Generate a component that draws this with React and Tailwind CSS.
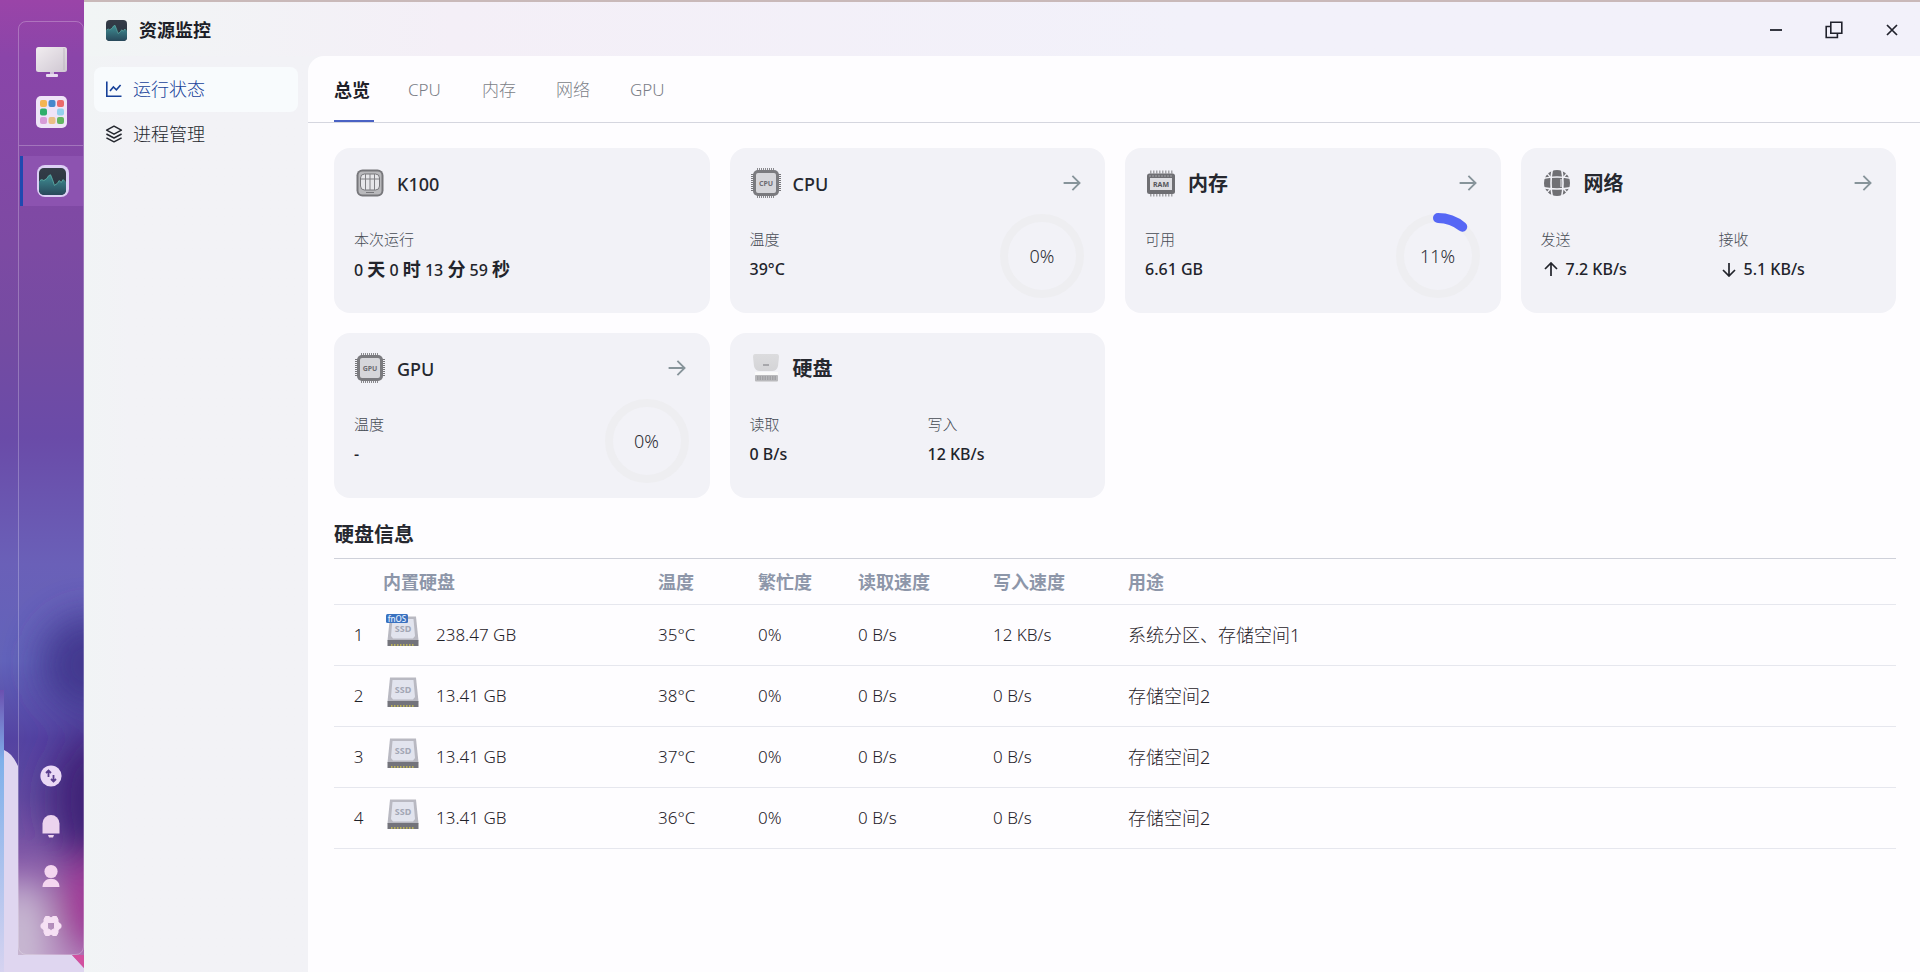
import { useState } from "react";

const navItems = [
  { id: "status", label: "运行状态", icon: ChartIcon },
  { id: "process", label: "进程管理", icon: LayersIcon },
];

const tabs = ["总览", "CPU", "内存", "网络", "GPU"];

const disks = [
  { id: 1, size: "238.47 GB", temp: "35°C", busy: "0%", read: "0 B/s", write: "12 KB/s", usage: "系统分区、存储空间1", system: true },
  { id: 2, size: "13.41 GB", temp: "38°C", busy: "0%", read: "0 B/s", write: "0 B/s", usage: "存储空间2" },
  { id: 3, size: "13.41 GB", temp: "37°C", busy: "0%", read: "0 B/s", write: "0 B/s", usage: "存储空间2" },
  { id: 4, size: "13.41 GB", temp: "36°C", busy: "0%", read: "0 B/s", write: "0 B/s", usage: "存储空间2" },
];

function ChartIcon() {
  return (
    <svg width="18" height="18" viewBox="0 0 18 18" fill="none" stroke="currentColor" strokeWidth="1.6">
      <path d="M1.8 1.5v14.7H16.5" />
      <path d="M5 11l3.4-4 3 2.8L15.6 5" />
    </svg>
  );
}

function LayersIcon() {
  return (
    <svg width="18" height="18" viewBox="0 0 18 18" fill="none" stroke="currentColor" strokeWidth="1.5" strokeLinejoin="round">
      <path d="M9 1.2l7.4 4L9 9.2l-7.4-4z" />
      <path d="M1.4 9L9 13l7.6-4" />
      <path d="M1.4 12.8l7.6 4 7.6-4" />
    </svg>
  );
}

function ArrowIcon() {
  return (
    <svg width="18" height="18" viewBox="0 0 18 18" fill="none" stroke="currentColor" strokeWidth="1.8">
      <path d="M.6 9h16M9.4 1.8L16.6 9l-7.2 7.2" />
    </svg>
  );
}

function MonitorAppIcon({ className }) {
  return (
    <svg className={className} viewBox="0 0 28 28">
      <defs>
        <linearGradient id="app-bg" x1="0" y1="0" x2="0" y2="1">
          <stop offset="0" stopColor="#343c47" />
          <stop offset="1" stopColor="#26323f" />
        </linearGradient>
        <linearGradient id="app-wave" x1="0" y1="0" x2="0" y2="1">
          <stop offset="0" stopColor="#3f8f94" />
          <stop offset="1" stopColor="#28485a" />
        </linearGradient>
      </defs>
      <rect x="0" y="0" width="28" height="28" rx="5" fill="url(#app-bg)" />
      <path d="M0 14l2-2 3 1 3-2 2-3 2-1 2 5 2 6 3-2 2-3 2 2 2-3 3 3v8a5 5 0 0 1-5 5H5a5 5 0 0 1-5-5z" fill="url(#app-wave)" />
      <path d="M1 13l2-1 2 1 3-2 2-3 2-1 2 5 2 6 3-2 2-3 2 2 2-3 2 2" fill="none" stroke="#62b9ae" strokeWidth=".8" />
    </svg>
  );
}

function DesktopIcon() {
  return (
    <svg width="32" height="32" viewBox="0 0 32 32">
      <defs>
        <linearGradient id="screen" x1="0" y1="0" x2="1" y2="1">
          <stop offset="0" stopColor="#f1edf0" />
          <stop offset="1" stopColor="#cfc7d2" />
        </linearGradient>
      </defs>
      <path d="M14 24h4v5h-4z" fill="#cfc0da" />
      <rect x="10" y="28" width="12" height="3" rx="1" fill="#e8dcf0" />
      <rect x="0" y="1" width="31" height="25" rx="2.5" fill="url(#screen)" />
      <path d="M28 2v22" stroke="#b9b1bb" strokeWidth=".8" />
    </svg>
  );
}

function AppsIcon() {
  const cells = [
    [4, 4, "#f3b552"], [12.5, 4, "#4588cc"], [21, 4, "#ea6a6c"],
    [4, 12.5, "#2fae6a"], [21, 12.5, "#93d1ee"],
    [4, 21, "#d79bd8"], [12.5, 21, "#e9bf86"], [21, 21, "#62b562"],
  ];
  return (
    <svg width="32" height="32" viewBox="0 0 32 32">
      <rect width="31" height="32" rx="5" fill="#efe4f8" />
      {cells.map(([x, y, color]) => (
        <rect key={color} x={x} y={y} width="7" height="7" rx="2" fill={color} />
      ))}
    </svg>
  );
}

function TransferIcon() {
  return (
    <svg width="22" height="22" viewBox="0 0 22 22">
      <circle cx="11" cy="11" r="10.6" fill="#ead9f5" />
      <path d="M8.500 12V6M6 8l2.500-2.500L11 8M13.500 10v6M11 14l2.500 2.500L16 14" fill="none" stroke="#5b3f8e" strokeWidth="1.800" />
    </svg>
  );
}

function BellIcon() {
  return (
    <svg width="22" height="24" viewBox="0 0 22 24" fill="#ecd3ee">
      <path d="M2.500 19.600V9.500a8.500 8.500 0 0 1 17 0v10.100z" />
      <path d="M8 21h6l-1 2.600H9z" />
    </svg>
  );
}

function UserIcon() {
  return (
    <svg width="22" height="24" viewBox="0 0 22 24" fill="#f4d6f0">
      <circle cx="11" cy="7.500" r="6.600" />
      <path d="M2.500 23c0-5 3.600-8.200 8.500-8.200s8.500 3.200 8.500 8.200z" />
    </svg>
  );
}

function GearIcon() {
  return (
    <svg width="22" height="22" viewBox="0 0 22 22">
      <path
        fillRule="evenodd"
        fill="#f6e0f4"
        stroke="#f6e0f4"
        strokeLinejoin="round"
        d="M5.500 1.500h3.500l2 1.500 2-1.500h3.500l1.500 3v2.500l3 2.500v3l-3 2.500v2.500l-1.500 3H13l-2-1.500-2 1.500H5.500l-1.500-3v-2.500l-3-2.500v-3l3-2.500v-2.500zM7.500 7.500v6l3.500 2 3.500-2v-6z"
      />
    </svg>
  );
}

function NasIcon() {
  return (
    <svg width="32" height="32" viewBox="0 0 32 32">
      <rect x="2.500" y="2.500" width="27" height="27" rx="6" fill="#77777b" />
      <rect x="4.500" y="4.500" width="23" height="23" rx="4" fill="#b9b9bc" />
      <rect x="6.500" y="7" width="19" height="16" rx="4" fill="#e6e6e9" stroke="#77777b" />
      <path d="M11.500 7v16M16 7v16M20.500 7v16M7 12h18" stroke="#808084" strokeWidth="1" />
      <path d="M12 25.500h8" stroke="#77777b" />
    </svg>
  );
}

function ChipIcon({ label }) {
  return (
    <svg width="32" height="32" viewBox="0 0 32 32">
      <path d="M7 2.500h18M7 29.500h18" stroke="#8a8a8e" strokeWidth="3" strokeDasharray="1 1" />
      <path d="M2.500 7v18M29.500 7v18" stroke="#77777b" strokeWidth="3" strokeDasharray="1 1" />
      <rect x="3" y="3" width="26" height="26" rx="5" fill="#7b7b7f" />
      <rect x="6" y="6" width="20" height="20" rx="2" fill="#d6d6da" />
      <text x="16" y="18.500" textAnchor="middle" fontSize="7" fontWeight="700" fill="#6d6d72">{label}</text>
    </svg>
  );
}

function RamIcon() {
  return (
    <svg width="32" height="32" viewBox="0 0 32 32">
      <path d="M5 5h23M5 28h23" stroke="#a4a4a8" strokeWidth="3" strokeDasharray="1.500 1.500" />
      <rect x="2" y="6.500" width="28" height="20.500" rx="2.500" fill="#6f6f73" />
      <path d="M4 9h24" stroke="#a4a4a8" strokeWidth="1" strokeDasharray="2 1" />
      <rect x="5" y="11" width="22" height="12" fill="#dedee2" />
      <text x="16" y="19.500" textAnchor="middle" fontSize="7" fontWeight="700" fill="#55555a">RAM</text>
    </svg>
  );
}

function GlobeIcon() {
  return (
    <svg width="32" height="32" viewBox="0 0 32 32">
      <circle cx="16" cy="16" r="13" fill="#707074" />
      <g fill="none" stroke="#f2f2f7" strokeWidth="1.600">
        <path d="M11.500 1q-3 15 0 30M20.500 1q3 15 0 30" />
        <path d="M1 11.500q15-3 30 0M1 20.500q15 3 30 0" />
        <path d="M5 5l5 6M27 5l-5 6M5 27l5-6M27 27l-5-6" strokeWidth="1.200" />
        <path d="M20 12v8" strokeWidth="1" />
      </g>
    </svg>
  );
}

function HddIcon() {
  return (
    <svg width="32" height="32" viewBox="0 0 32 32">
      <defs>
        <linearGradient id="hdd" x1="0" y1="0" x2="0" y2="1">
          <stop offset="0" stopColor="#dcdcde" />
          <stop offset="1" stopColor="#d4d4d7" />
        </linearGradient>
      </defs>
      <path d="M5 2h22q2 0 2 3l-1 9q-1 5-6 5H10q-5 0-6-5L3 5q0-3 2-3z" fill="url(#hdd)" />
      <path d="M13 13h6" stroke="#97979b" strokeWidth="1.500" />
      <rect x="5" y="20" width="23" height="3" fill="#fafafa" />
      <rect x="5" y="23" width="23" height="6.500" rx="1" fill="#b9b9bc" />
      <path d="M7 26h20" stroke="#a2a2a6" strokeWidth="4" strokeDasharray="1.500 1" />
    </svg>
  );
}

function SsdIcon({ system }) {
  return (
    <svg width="34" height="34" viewBox="0 0 34 34">
      <path d="M4 2.500h26l2.500 24H1.500z" fill="#b9b9c2" />
      <path d="M6.500 5h21l1.500 17-2 2.500H7L5 22z" fill="#e2e4ee" />
      <path d="M1.500 26h31v6h-31z" fill="#73737b" />
      <path d="M5 31h24" stroke="#b9b05a" strokeWidth="2" strokeDasharray="1.500 1.500" />
      <text x="17" y="17.500" textAnchor="middle" fontSize="9" fontWeight="700" fill="#a3a7b5">SSD</text>
      {system && (
        <>
          <rect x="0" y="0" width="22" height="9" rx="1.500" fill="#3a72c0" />
          <text x="11" y="7.500" textAnchor="middle" fontSize="8" fontWeight="500" fill="#e8f1ff">fnOS</text>
        </>
      )}
    </svg>
  );
}

function Wallpaper() {
  return (
    <svg className="absolute inset-0 h-full w-full" viewBox="0 0 84 972" preserveAspectRatio="none">
      <defs>
        <linearGradient id="wall" x1="0" y1="0" x2="0" y2="1">
          <stop offset="0" stopColor="#9a44a8" />
          <stop offset=".06" stopColor="#8a45a9" />
          <stop offset=".25" stopColor="#7d4aa3" />
          <stop offset=".35" stopColor="#744ba2" />
          <stop offset=".45" stopColor="#6a4ba8" />
          <stop offset=".58" stopColor="#6a60b8" />
          <stop offset=".68" stopColor="#6263ba" />
          <stop offset=".76" stopColor="#5443a2" />
          <stop offset=".82" stopColor="#5f4a9f" />
          <stop offset=".9" stopColor="#8a5aa8" />
          <stop offset="1" stopColor="#b98ac0" />
        </linearGradient>
        <linearGradient id="edge" x1="0" y1="0" x2="0" y2="1">
          <stop offset="0" stopColor="#6b50b0" />
          <stop offset=".25" stopColor="#7fb0ea" />
          <stop offset="1" stopColor="#d6d3f0" />
        </linearGradient>
        <filter id="soft" x="-150%" y="-80%" width="400%" height="260%">
          <feGaussianBlur stdDeviation="18" />
        </filter>
      </defs>
      <rect width="84" height="972" fill="url(#wall)" />
      <g filter="url(#soft)">
        <ellipse cx="90" cy="665" rx="50" ry="50" fill="#43388f" />
        <ellipse cx="94" cy="800" rx="44" ry="66" fill="#3f2277" />
        <ellipse cx="96" cy="905" rx="40" ry="46" fill="#a03a96" />
        <ellipse cx="20" cy="940" rx="30" ry="62" fill="#c9bcd3" />
      </g>
      <path d="M0 690h4v282H0z" fill="url(#edge)" />
      <path d="M4 750q8 3 14 16v189h54l12 13v4H4z" fill="#dfd6f0" />
      <path d="M72 955h12v13z" fill="#d2509f" />
    </svg>
  );
}

function DockButton({ label, active, children }) {
  return (
    <button
      aria-label={label}
      className={
        active
          ? "flex h-[50px] w-full items-center justify-center border-l-3 border-[#1f49b0] bg-[#9259b5]/70 pr-px"
          : "flex h-[50px] w-full items-center justify-center"
      }
    >
      {children}
    </button>
  );
}

function Dock() {
  return (
    <aside className="relative flex w-[84px] shrink-0 pt-[21px] pb-[17px] pl-[18px]">
      <Wallpaper />
      <div className="relative flex w-full flex-col justify-between rounded-lg border border-white/25">
        <div>
          <div className="border-b border-white/25 pt-[15px] pb-[8px] pl-0.5">
            <DockButton label="桌面"><DesktopIcon /></DockButton>
            <DockButton label="应用"><AppsIcon /></DockButton>
          </div>
          <div className="pt-[10px] pl-px">
            <DockButton label="资源监控" active>
              <span className="flex size-8 items-center justify-center rounded-lg bg-[#dccff5]">
                <MonitorAppIcon className="size-[27px]" />
              </span>
            </DockButton>
          </div>
        </div>
        <div className="pb-[3px]">
          <DockButton label="传输"><TransferIcon /></DockButton>
          <DockButton label="通知"><BellIcon /></DockButton>
          <DockButton label="用户"><UserIcon /></DockButton>
          <DockButton label="设置"><GearIcon /></DockButton>
        </div>
      </div>
    </aside>
  );
}

function TitleBar() {
  return (
    <header className="flex h-[54px] items-center justify-between bg-linear-to-r from-[#f1f5f5] via-[#f4eff7] via-20% to-[#f2f1fa] to-60% pt-0.5 pl-[22px]">
      <div className="flex items-center gap-3">
        <MonitorAppIcon className="size-[21px]" />
        <h1 className="text-lg font-bold text-[#1d1f28]">资源监控</h1>
      </div>
      <div className="flex text-[#20222c]">
        <button aria-label="最小化" className="flex h-10 w-[58px] items-center justify-center">
          <svg width="12" height="12" viewBox="0 0 12 12"><path d="M0 6h12" stroke="currentColor" strokeWidth="1.800" /></svg>
        </button>
        <button aria-label="还原" className="flex h-10 w-[58px] items-center justify-center">
          <svg width="18" height="18" viewBox="0 0 18 18" fill="none" stroke="currentColor" strokeWidth="1.600">
            <path d="M5.800 1.200h11v11h-11zM5.800 5.500H1.200v11h11.200v-4.300" />
          </svg>
        </button>
        <button aria-label="关闭" className="flex h-10 w-[57px] items-center justify-center">
          <svg width="12" height="12" viewBox="0 0 12 12"><path d="M1 1l10 10M11 1L1 11" stroke="currentColor" strokeWidth="1.700" /></svg>
        </button>
      </div>
    </header>
  );
}

function Ring({ value }) {
  const length = 2 * Math.PI * 38;
  return (
    <div className="relative size-[86px]">
      <svg width="86" height="86" viewBox="0 0 86 86" fill="none">
        <circle cx="43" cy="43" r="38" stroke="#eeeef1" strokeWidth="8" />
        {value > 0 && (
          <circle
            cx="43"
            cy="43"
            r="38"
            stroke="#5667f5"
            strokeWidth="10"
            strokeLinecap="round"
            strokeDasharray={`${(length * value) / 100} ${length}`}
            transform="rotate(-90 43 43)"
          />
        )}
      </svg>
      <span className="absolute inset-0 flex items-center justify-center text-lg font-light text-[#2c2d34]">{value}%</span>
    </div>
  );
}

function Stat({ label, children }) {
  return (
    <div>
      <div className="text-[15px] leading-6 font-light text-[#464b54]">{label}</div>
      <div className="mt-1 flex items-center text-base leading-7 font-medium text-[#22242b]">{children}</div>
    </div>
  );
}

function Card({ icon, title, link, ring, children }) {
  return (
    <section className="flex h-[165px] flex-col rounded-2xl bg-[#f2f2f7] px-5 pt-[19px]">
      <div className="flex h-8 items-center justify-between">
        <div className="flex items-center gap-[11px]">
          {icon}
          <h2 className="pt-0.5 text-lg font-medium text-[#26282f]">{title}</h2>
        </div>
        {link && (
          <a href="#detail" aria-label="查看详情" className="pr-1 text-[#87949a]">
            <ArrowIcon />
          </a>
        )}
      </div>
      <div className="flex justify-between">
        <div className="grid auto-cols-[minmax(178px,auto)] grid-flow-col pt-7">{children}</div>
        {ring !== undefined && (
          <div className="pt-3.5">
            <Ring value={ring} />
          </div>
        )}
      </div>
    </section>
  );
}

function Uptime() {
  return (
    <p className="whitespace-nowrap">
      0 <b className="text-lg leading-7">天</b> 0 <b className="text-lg leading-7">时</b> 13 <b className="text-lg leading-7">分</b> 59{" "}
      <b className="text-lg leading-7">秒</b>
    </p>
  );
}

function SpeedArrow({ down }) {
  return (
    <svg className="mr-2 ml-[3px]" width="14" height="15" viewBox="0 0 14 15" fill="none" stroke="currentColor" strokeWidth="1.700">
      <path d={down ? "M7 1v12.500M1 8l6 6 6-6" : "M7 14V1.500M1 7l6-6 6 6"} />
    </svg>
  );
}

function DiskTable() {
  return (
    <table className="w-full table-fixed border-t border-[#cfd1da] text-left text-[17px] font-light text-[#1f2128]">
      <thead>
        <tr className="h-[46px] border-b border-[#e6e7ee] text-lg text-[#8d96a9]">
          <th className="w-[49px]"></th>
          <th className="w-[275px] font-bold">内置硬盘</th>
          <th className="w-[100px] font-bold">温度</th>
          <th className="w-[100px] font-bold">繁忙度</th>
          <th className="w-[135px] font-bold">读取速度</th>
          <th className="w-[135px] font-bold">写入速度</th>
          <th className="font-bold">用途</th>
        </tr>
      </thead>
      <tbody>
        {disks.map((disk) => (
          <tr key={disk.id} className="h-[61px] border-b border-[#e6e7ee]">
            <td className="text-center">{disk.id}</td>
            <td>
              <div className="flex items-center gap-4 pl-[3px]">
                <div className="pb-2"><SsdIcon system={disk.system} /></div>
                {disk.size}
              </div>
            </td>
            <td>{disk.temp}</td>
            <td>{disk.busy}</td>
            <td>{disk.read}</td>
            <td>{disk.write}</td>
            <td className="text-lg">{disk.usage}</td>
          </tr>
        ))}
      </tbody>
    </table>
  );
}

function App() {
  const [page, setPage] = useState("status");
  const [tab, setTab] = useState("总览");

  return (
    <div className="flex min-h-screen bg-[#f2f2f6] font-['Noto_Sans','Noto_Sans_CJK_SC',sans-serif]">
      <Dock />
      <div className="flex min-w-0 flex-1 flex-col border-t-2 border-[#c9b9b9]">
        <TitleBar />
        <div className="flex flex-1">
          <nav className="w-[224px] shrink-0 bg-linear-to-r from-[#f1f4f5] to-[#f2f2f6] to-20% px-[10px] pt-[11px]">
            {navItems.map(({ id, label, icon: Icon }) => (
              <button
                key={id}
                onClick={() => setPage(id)}
                className={
                  page === id
                    ? "flex h-[45px] w-full items-center gap-[10px] rounded-lg bg-[#f8fbfd] px-[11px] pb-0.5 text-lg font-light text-[#164099]"
                    : "flex h-[45px] w-full items-center gap-[10px] rounded-lg px-[11px] pb-0.5 text-lg font-light text-[#24272e]"
                }
              >
                <Icon />
                {label}
              </button>
            ))}
          </nav>
          <main className="min-w-0 flex-1 rounded-tl-2xl bg-[#fefdff]">
            <div role="tablist" className="flex h-[67px] gap-[34px] border-b border-[#d5d6df] pl-[26px]">
              {tabs.map((name) => (
                <button
                  key={name}
                  role="tab"
                  aria-selected={tab === name}
                  onClick={() => setTab(name)}
                  className={
                    tab === name
                      ? "w-10 border-b-2 border-[#4a62c4] pt-1 text-left text-lg font-bold text-[#1f2129]"
                      : "w-10 border-b-2 border-transparent pt-1 text-left text-[17px] font-light text-[#7b7d87]"
                  }
                >
                  {name}
                </button>
              ))}
            </div>
            <div className="pt-[25px] pr-6 pl-[26px]">
              <div className="grid grid-cols-4 gap-5">
                <Card icon={<NasIcon />} title="K100">
                  <Stat label="本次运行"><Uptime /></Stat>
                </Card>
                <Card icon={<ChipIcon label="CPU" />} title="CPU" link ring={0}>
                  <Stat label="温度">39°C</Stat>
                </Card>
                <Card icon={<RamIcon />} title={<b className="text-xl">内存</b>} link ring={11}>
                  <Stat label="可用">6.61 GB</Stat>
                </Card>
                <Card icon={<GlobeIcon />} title={<b className="text-xl">网络</b>} link>
                  <Stat label="发送"><SpeedArrow />7.2 KB/s</Stat>
                  <Stat label="接收"><SpeedArrow down />5.1 KB/s</Stat>
                </Card>
                <Card icon={<ChipIcon label="GPU" />} title="GPU" link ring={0}>
                  <Stat label="温度">-</Stat>
                </Card>
                <Card icon={<HddIcon />} title={<b className="text-xl">硬盘</b>}>
                  <Stat label="读取">0 B/s</Stat>
                  <Stat label="写入">12 KB/s</Stat>
                </Card>
              </div>
              <h2 className="mt-[21px] mb-[7px] text-xl leading-8 font-bold text-[#26282f]">硬盘信息</h2>
              <DiskTable />
            </div>
          </main>
        </div>
      </div>
    </div>
  );
}

export default App;
